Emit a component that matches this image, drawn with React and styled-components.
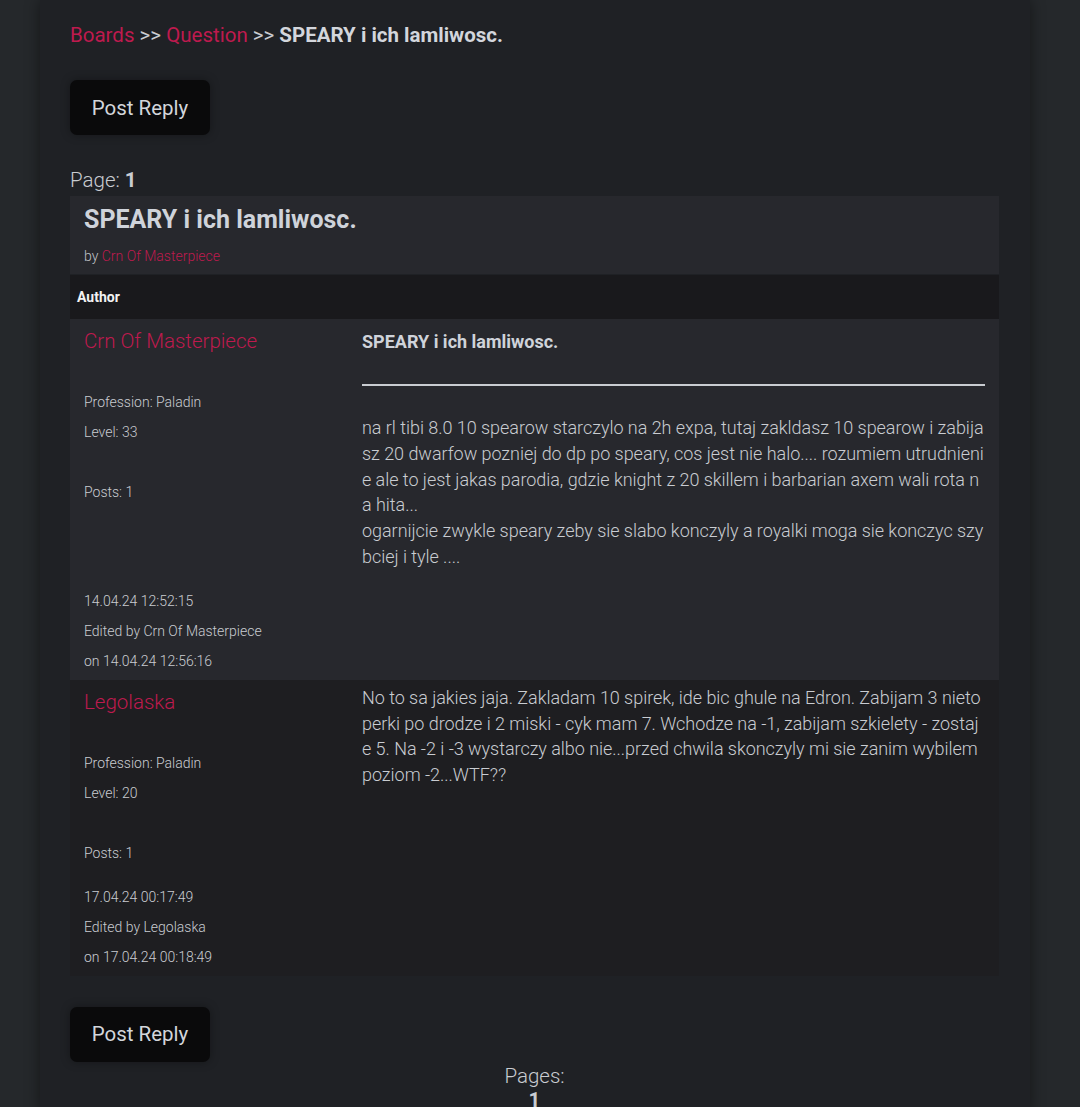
import styled, { createGlobalStyle } from 'styled-components';

const GlobalStyle = createGlobalStyle`
  html, body {
    margin: 0;
    padding: 0;
    background: #25282b;
    font-family: Roboto, 'Noto Sans', sans-serif;
    color: #c9ccd1;
  }
`;

const Page = styled.div`
  display: flex;
  justify-content: center;
  min-height: 1107px;
  padding: 0 50px 0 40px;
`;

const Panel = styled.main`
  flex: 1;
  background: #1f2125;
  box-shadow: 0 0 14px rgba(0, 0, 0, 0.45);
  padding: 23px 31px 0 30px;
  display: flex;
  flex-direction: column;
  align-items: flex-start;
`;

const Crumbs = styled.nav`
  font-size: 20.5px;
  line-height: 24px;
  color: #c9ccd1;
`;

const CrumbLink = styled.a`
  color: #be1a4e;
  text-decoration: none;
`;

const CrumbCurrent = styled.strong`
  color: #d3d6dc;
  font-weight: 700;
`;

const ReplyButton = styled.button`
  margin-top: ${(p) => p.$top}px;
  width: 140px;
  height: 55px;
  border: none;
  border-radius: 7px;
  background: #0a0a0b;
  box-shadow: 0 0 10px rgba(0, 0, 0, 0.35);
  color: #d3d6db;
  font-family: Roboto, sans-serif;
  font-size: 20.5px;
`;

const PageLabel = styled.div`
  margin-top: 33px;
  font-size: 20.5px;
  line-height: 24px;
  font-weight: 300;
  b {
    font-weight: 700;
  }
`;

const Table = styled.section`
  margin-top: 4px;
  align-self: stretch;
  display: flex;
  flex-direction: column;
`;

const ThreadHead = styled.header`
  background: #27282d;
  padding: 8px 14px 8px;
`;

const ThreadTitle = styled.h1`
  margin: 0;
  font-size: 25px;
  line-height: 32px;
  font-weight: 700;
  color: #cfd3da;
`;

const ThreadBy = styled.div`
  margin-top: 10px;
  font-size: 14px;
  line-height: 20px;
  font-weight: 300;
  color: #c0c3c8;
`;

const Pink = styled.span`
  color: #be1a4e;
`;

const AuthorHead = styled.div`
  margin-top: 1px;
  background: #19191c;
  height: 44px;
  padding: 0 7px;
  display: flex;
  align-items: center;
  font-size: 14px;
  font-weight: 700;
  color: #f2f2f2;
`;

const Post = styled.article`
  display: grid;
  grid-template-columns: 278px 1fr;
  background: ${(p) => (p.$alt ? '#1e1e21' : '#27282d')};
`;

const AuthorCell = styled.div`
  padding: 10px 14px 7px;
`;

const AuthorName = styled.div`
  font-size: 20.5px;
  line-height: 24px;
  font-weight: 300;
  color: #be1a4e;
  margin-bottom: 34px;
`;

const InfoLine = styled.div`
  font-size: 14px;
  line-height: 30px;
  font-weight: 300;
  color: #c9ccd1;
  min-height: 30px;
`;

const ContentCell = styled.div`
  padding: 5px 14px 9px;
`;

const PostTitle = styled.div`
  margin-top: 5px;
  font-size: 18px;
  line-height: 26px;
  font-weight: 700;
  color: #cfd3da;
`;

const Rule = styled.hr`
  margin: 29px 0 29px;
  border: none;
  height: 2px;
  background: #c9ccd1;
`;

const Body = styled.div`
  font-size: 18px;
  line-height: 25.8px;
  font-weight: 300;
  letter-spacing: -0.04px;
  word-break: break-all;
  color: #c9ccd1;
`;

const DateCell = styled.div`
  padding: 7px 14px 4px;
`;

const Pager = styled.div`
  align-self: stretch;
  margin-top: 2px;
  text-align: center;
  font-size: 20.5px;
  line-height: 24px;
  font-weight: 300;
  b {
    display: block;
    font-weight: 700;
  }
`;

const posts = [
  {
    name: 'Crn Of Masterpiece',
    level: 33,
    posts: 1,
    title: 'SPEARY i ich lamliwosc.',
    body: [
      'na rl tibi 8.0 10 spearow starczylo na 2h expa, tutaj zakldasz 10 spearow i zabijasz 20 dwarfow pozniej do dp po speary, cos jest nie halo.... rozumiem utrudnienie ale to jest jakas parodia, gdzie knight z 20 skillem i barbarian axem wali rota na hita...',
      'ogarnijcie zwykle speary zeby sie slabo konczyly a royalki moga sie konczyc szybciej i tyle ....',
    ],
    date: '14.04.24 12:52:15',
    edited: 'on 14.04.24 12:56:16',
  },
  {
    name: 'Legolaska',
    level: 20,
    posts: 1,
    body: [
      'No to sa jakies jaja. Zakladam 10 spirek, ide bic ghule na Edron. Zabijam 3 nietoperki po drodze i 2 miski - cyk mam 7. Wchodze na -1, zabijam szkielety - zostaje 5. Na -2 i -3 wystarczy albo nie...przed chwila skonczyly mi sie zanim wybilem poziom -2...WTF??',
    ],
    date: '17.04.24 00:17:49',
    edited: 'on 17.04.24 00:18:49',
  },
];

function PostRow({ post, alt }) {
  return (
    <Post $alt={alt}>
      <AuthorCell>
        <AuthorName>{post.name}</AuthorName>
        <InfoLine>Profession: Paladin</InfoLine>
        <InfoLine>Level: {post.level}</InfoLine>
        <InfoLine />
        <InfoLine>Posts: {post.posts}</InfoLine>
      </AuthorCell>
      <ContentCell>
        {post.title && (
          <>
            <PostTitle>{post.title}</PostTitle>
            <Rule />
          </>
        )}
        <Body>
          {post.body.map((p, i) => (
            <div key={i}>{p}</div>
          ))}
        </Body>
      </ContentCell>
      <DateCell>
        <InfoLine>{post.date}</InfoLine>
        <InfoLine>Edited by {post.name}</InfoLine>
        <InfoLine>{post.edited}</InfoLine>
      </DateCell>
      <div />
    </Post>
  );
}

export default function App() {
  return (
    <>
      <GlobalStyle />
      <Page>
        <Panel>
          <Crumbs>
            <CrumbLink href="#">Boards</CrumbLink> &gt;&gt;{' '}
            <CrumbLink href="#">Question</CrumbLink> &gt;&gt;{' '}
            <CrumbCurrent>SPEARY i ich lamliwosc.</CrumbCurrent>
          </Crumbs>
          <ReplyButton $top={33}>Post Reply</ReplyButton>
          <PageLabel>
            Page: <b>1</b>
          </PageLabel>
          <Table>
            <ThreadHead>
              <ThreadTitle>SPEARY i ich lamliwosc.</ThreadTitle>
              <ThreadBy>
                by <Pink>Crn Of Masterpiece</Pink>
              </ThreadBy>
            </ThreadHead>
            <AuthorHead>Author</AuthorHead>
            {posts.map((p, i) => (
              <PostRow key={p.name} post={p} alt={i % 2 === 1} />
            ))}
          </Table>
          <ReplyButton $top={31}>Post Reply</ReplyButton>
          <Pager>
            Pages:
            <b>1</b>
          </Pager>
        </Panel>
      </Page>
    </>
  );
}
